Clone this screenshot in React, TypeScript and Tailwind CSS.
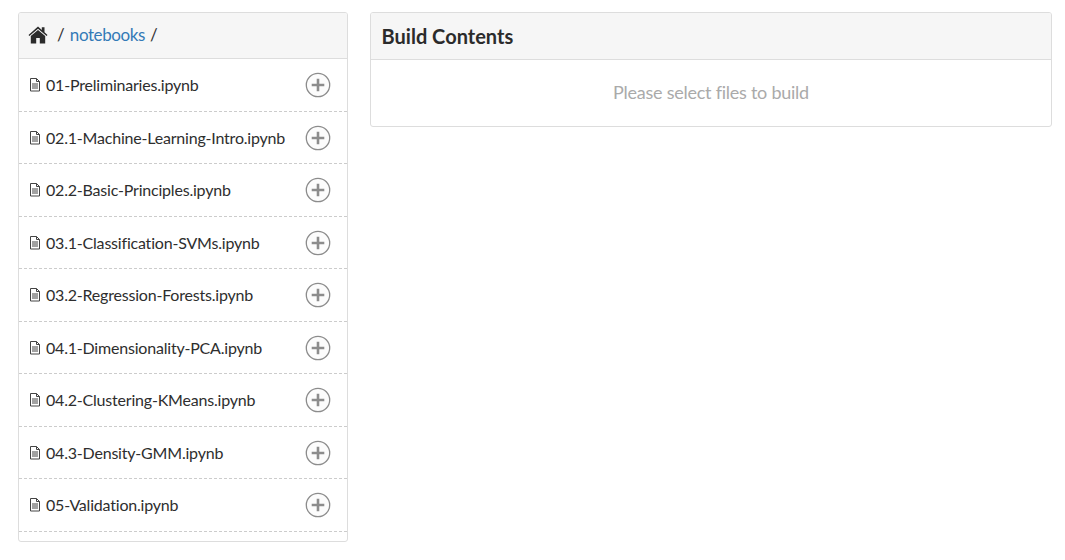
const files = [
  "01-Preliminaries.ipynb",
  "02.1-Machine-Learning-Intro.ipynb",
  "02.2-Basic-Principles.ipynb",
  "03.1-Classification-SVMs.ipynb",
  "03.2-Regression-Forests.ipynb",
  "04.1-Dimensionality-PCA.ipynb",
  "04.2-Clustering-KMeans.ipynb",
  "04.3-Density-GMM.ipynb",
  "05-Validation.ipynb",
];

function FileIcon() {
  return (
    <svg width="12" height="14" viewBox="0 0 12 14" fill="none" stroke="#444" strokeWidth="1" className="shrink-0">
      <path d="M1.5 0.5H7.5L10.5 3.5V13H1.5Z" />
      <path d="M7.5 0.5V3.5H10.5" />
      <path d="M3 6H9M3 8H9M3 10H9" />
    </svg>
  );
}

function HomeIcon() {
  return (
    <svg width="20" height="18" viewBox="0 0 20 18" fill="#2b2b2b" className="shrink-0">
      <path d="M10 0.5L0.5 9L1.4 10.1L10 2.7L18.6 10.1L19.5 9L16.5 6.3V1.2H13.8V3.9Z" />
      <path d="M10 3.9L2.8 10.1V17.5H8.2V12H11.8V17.5H17.2V10.1Z" />
    </svg>
  );
}

function PlusIcon() {
  return (
    <svg width="26" height="26" viewBox="0 0 26 26" fill="none" className="shrink-0">
      <circle cx="13" cy="13" r="11.7" fill="#fcfcfc" stroke="#8c8c8c" strokeWidth="1.3" />
      <path d="M13 6.7V19.3M6.7 13H19.3" stroke="#8c8c8c" strokeWidth="2.6" />
    </svg>
  );
}

export default function App() {
  return (
    <div className="flex items-start gap-[22px] pt-3 pl-[18px] pr-[13px] font-['Lato','Open_Sans',sans-serif] text-[#333]">
      <div className="w-[330px] h-[530px] overflow-hidden rounded-[3px] border border-[#dddddd] bg-white">
        <div className="flex h-[46.4px] items-center border-b border-[#dddddd] bg-[#f6f6f6] pl-[9px] pb-[2px] text-[17px] tracking-[-0.4px] text-[#333]">
          <HomeIcon />
          <span className="ml-[9px]">/</span>
          <a className="ml-[5.5px] text-[#337ab7]">notebooks</a>
          <span className="ml-[5px]">/</span>
        </div>
        <ul>
          {files.map((f) => (
            <li
              key={f}
              className="flex h-[52.5px] items-center justify-between border-b border-dashed border-[#cccccc] pl-[10px] pr-[16px]"
            >
              <div className="flex items-center gap-[5px] text-[16px] tracking-[-0.2px] text-[#2e2e2e]">
                <FileIcon />
                <span>{f}</span>
              </div>
              <PlusIcon />
            </li>
          ))}
        </ul>
      </div>
      <div className="flex-1 overflow-hidden rounded-[3px] border border-[#dddddd] bg-white">
        <div className="flex h-[47px] items-center border-b border-[#dddddd] bg-[#f6f6f6] pl-[10.6px] pb-[1px] text-[20px] leading-none font-bold text-[#2b2b2b]">
          Build Contents
        </div>
        <div className="flex h-[66px] items-center justify-center pb-[2px] text-[18px] tracking-[-0.25px] text-[#aaaaaa]">
          Please select files to build
        </div>
      </div>
    </div>
  );
}
